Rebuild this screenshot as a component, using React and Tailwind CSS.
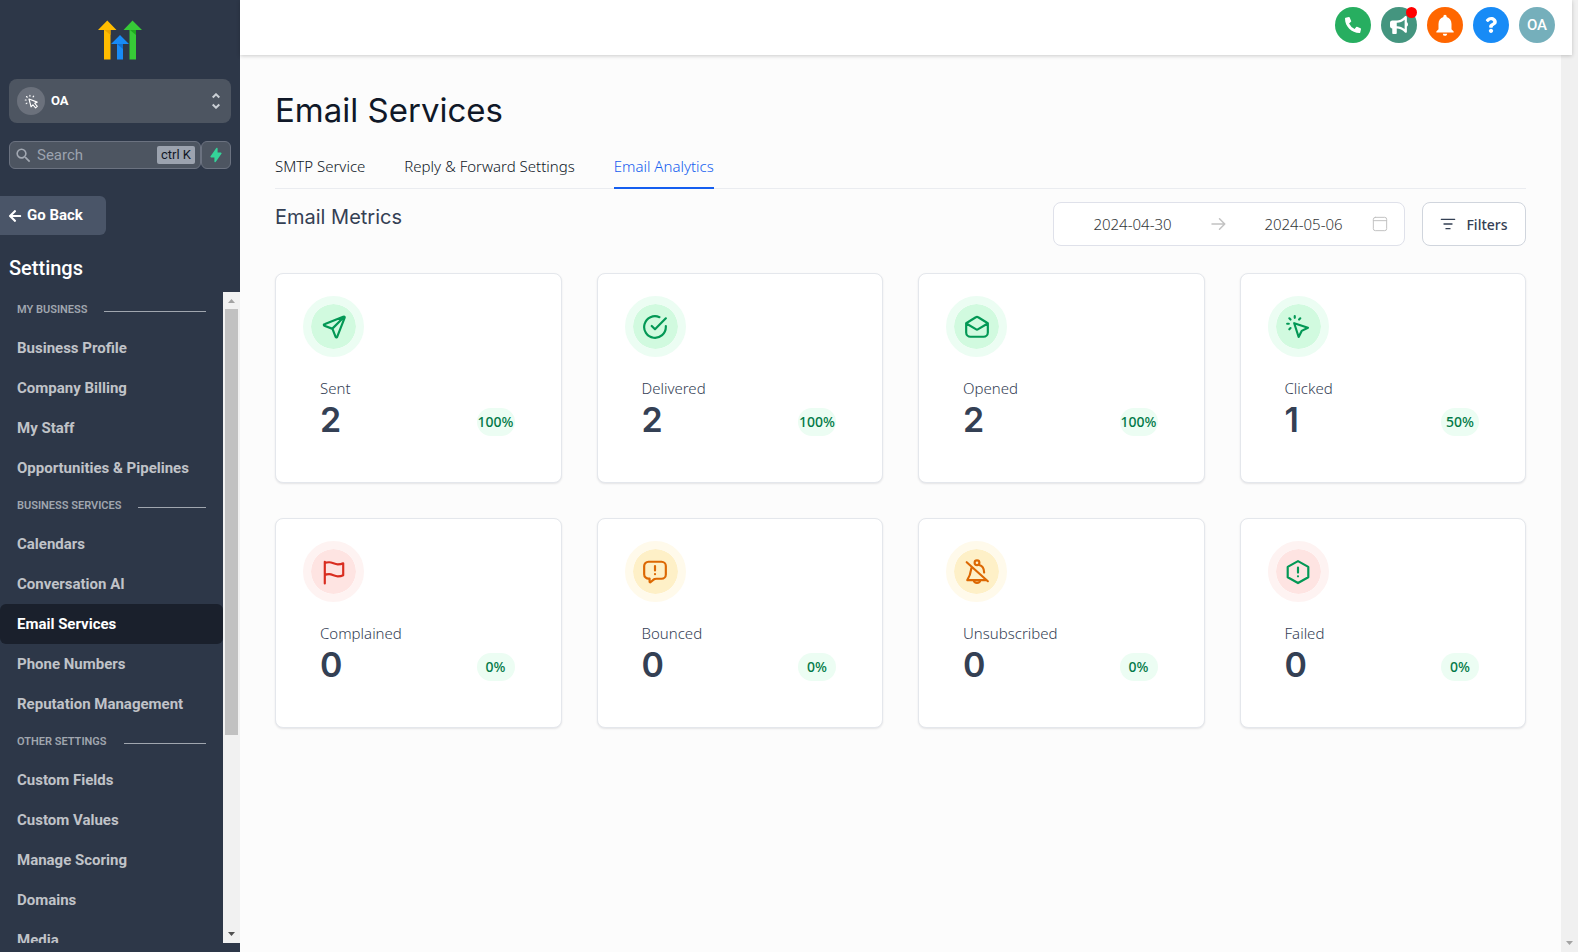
import { FaPhoneAlt, FaQuestion, FaArrowLeft } from "react-icons/fa";
import { FaBullhorn } from "react-icons/fa6";
import { HiLightningBolt } from "react-icons/hi";
import { MdNotifications, MdSearch } from "react-icons/md";

const sections = [
  {
    title: "MY BUSINESS",
    items: ["Business Profile", "Company Billing", "My Staff", "Opportunities & Pipelines"],
  },
  {
    title: "BUSINESS SERVICES",
    items: ["Calendars", "Conversation AI", "Email Services", "Phone Numbers", "Reputation Management"],
  },
  {
    title: "OTHER SETTINGS",
    items: ["Custom Fields", "Custom Values", "Manage Scoring", "Domains", "Media"],
  },
];

function Stroke({ className = "size-[26px]", width = 2, children }) {
  return (
    <svg viewBox="0 0 24 24" fill="none" stroke="currentColor" strokeWidth={width} strokeLinecap="round" strokeLinejoin="round" className={className} aria-hidden="true">
      {children}
    </svg>
  );
}

const SendIcon = () => (
  <Stroke>
    <path d="M10.5 13.500 21 3M10.600 13.800l2.700 6.800c.2.600.4.900.600 1 .2.100.5.100.700 0 .2-.1.300-.4.500-1l6.600-16.800c.2-.5.300-.8.200-1-.1-.2-.2-.3-.4-.4-.2-.1-.5 0-1 .2L3.700 9.200c-.6.200-.9.300-1 .5-.1.200-.1.500 0 .7.100.2.400.4 1 .6l6.500 2.500c.1 0 .2.100.4.300z" />
  </Stroke>
);
const CheckIcon = () => (
  <Stroke>
    <path d="M22 11.100V12a10 10 0 1 1-5.900-9.100M22 4 12 14l-3-3" />
  </Stroke>
);
const OpenedIcon = () => (
  <Stroke>
    <path d="M2 8.500 10.900 3a2 2 0 0 1 2.200 0L22 8.500V17a4 4 0 0 1-4 4H6a4 4 0 0 1-4-4zM2.500 9l8.400 5a2 2 0 0 0 2.200 0l8.400-5" />
  </Stroke>
);
const ClickIcon = () => (
  <Stroke>
    <path d="M9 3.500V2M5.100 5.100 4 4M5.100 13 4 14.100M13 5.100 14.100 4M3.500 9H2M8.500 8.500l4.100 12.700 2.800-5.600 5.800-2.900z" />
  </Stroke>
);
const FlagIcon = () => (
  <Stroke>
    <path d="M3.500 22.500v-20M3.500 15s1-1 4-1 5 2 8 2 5-1 5-1V4s-2 1-5 1-5-2-8-2-4 1-4 1" />
  </Stroke>
);
const BounceIcon = () => (
  <Stroke>
    <path d="M12 10.500V6.500M12 14h.01M7 18v2.300c0 .6 0 .8.100 1 .1.100.3.200.5.200s.4-.2.800-.5l2.300-1.900c.5-.4.8-.6 1-.7.300-.1.700-.2 1.700-.2H18a4 4 0 0 0 4-4V6.500a4 4 0 0 0-4-4H6a4 4 0 0 0-4 4V14a4 4 0 0 0 5 4z" />
  </Stroke>
);
const BellOffIcon = () => (
  <Stroke>
    <circle cx="12" cy="3.500" r="2.200" />
    <path d="M2.500 3 22 20.500M7 7.500C6.500 9 6.700 14 3 19.500h17.500M14 5.500c3 .7 4.500 3 4.600 7M9 19.500a3 2.600 0 0 0 6 0" />
  </Stroke>
);
const FailIcon = () => (
  <Stroke>
    <path d="M12 8v4.500M12 16h.01M12 2l9.500 5.300v9.600L12 22.200l-9.500-5.300V7.300z" />
  </Stroke>
);

const green = "bg-[#d1fadf] border-[#ecfdf3] text-[#039855]";
const red = "bg-[#fee4e2] border-[#fef3f2] text-[#d92d20]";
const amber = "bg-[#fef0c7] border-[#fffaeb] text-[#dc6803]";
const redGreen = "bg-[#fee4e2] border-[#fef3f2] text-[#039855]";

const metrics = [
  { label: "Sent", value: 2, rate: "100%", Icon: SendIcon, tone: green },
  { label: "Delivered", value: 2, rate: "100%", Icon: CheckIcon, tone: green },
  { label: "Opened", value: 2, rate: "100%", Icon: OpenedIcon, tone: green },
  { label: "Clicked", value: 1, rate: "50%", Icon: ClickIcon, tone: green },
  { label: "Complained", value: 0, rate: "0%", Icon: FlagIcon, tone: red },
  { label: "Bounced", value: 0, rate: "0%", Icon: BounceIcon, tone: amber },
  { label: "Unsubscribed", value: 0, rate: "0%", Icon: BellOffIcon, tone: amber },
  { label: "Failed", value: 0, rate: "0%", Icon: FailIcon, tone: redGreen },
];

function Logo() {
  return (
    <svg viewBox="0 0 44 40" className="h-10 w-11" role="img" aria-label="Logo">
      <path fill="#ffbc00" d="M9.300.5 18.500 10h-6v29.500H6V10H0z" />
      <path fill="#37ca37" d="M34.500.5 44 10h-6v29.500h-6.500V10h-6z" />
      <path fill="#188bf6" d="M22 15l9 9h-6v15.500h-6V24h-6z" />
      <path fill="#e8a200" d="M6.500 10h6v5z" />
      <path fill="#0f6fd0" d="M19 24h6v5z" />
      <path fill="#1fa81f" d="M32 10h6v5z" />
    </svg>
  );
}

function Sidebar() {
  return (
    <aside className="flex w-60 shrink-0 flex-col bg-[#2d3748] pb-[9px] font-['Roboto',sans-serif] text-white">
      <div className="flex justify-center pt-5 pb-[19px]">
        <Logo />
      </div>
      <button className="mx-[9px] flex h-11 items-center rounded-lg bg-[#4d5561] px-2 text-left">
        <span className="flex size-7 items-center justify-center rounded-full bg-[#6b717c]">
          <Stroke className="size-[15px]" width={1.8}>
            <path d="M8 8l3.300 12.500 2.900-3.300 4.300 5 2.800-2.500-4.200-4.900 4-1.800zM9.500 2v1.500M2 9.500h1.500M4 4l1.200 1.200M15.500 3.500l-1 1.200M3.500 15.500l1.200-1" />
          </Stroke>
        </span>
        <span className="ml-[6px] flex-1 text-[13px] font-bold">OA</span>
        <svg viewBox="0 0 8 16" className="mr-[3px] h-4 w-2" fill="none" stroke="#cbd0d6" strokeWidth="2" aria-hidden="true">
          <path d="M.7 4.500 4 1.300l3.300 3.200M.7 11.500 4 14.700l3.300-3.200" />
        </svg>
      </button>
      <div className="mx-[9px] mt-[18px] flex h-7">
        <label className="flex min-w-0 flex-1 items-center rounded-md border border-[#6b7280] bg-[#4d5561] pr-[5px] pl-1">
          <MdSearch className="size-[19px] shrink-0 text-[#a3a9b3]" />
          <input aria-label="Search" placeholder="Search" className="ml-1 w-full min-w-0 bg-transparent text-[15px] outline-none placeholder:text-[#9ca3af]" />
          <kbd className="flex h-[18px] shrink-0 items-center rounded-xs bg-[#9ca3af] px-1 font-['Roboto',sans-serif] text-[13px] text-[#111827]">ctrl K</kbd>
        </label>
        <button aria-label="Quick actions" className="flex w-[30px] items-center justify-center rounded-md border border-[#6b7280] bg-[#4d5561] text-[#34d399]">
          <HiLightningBolt className="size-4" />
        </button>
      </div>
      <button className="mt-[27px] flex h-[39px] w-[106px] items-center gap-[5px] rounded-r-md bg-[#4a5568] pl-2 text-[15px] font-bold">
        <FaArrowLeft className="size-[14px]" />
        Go Back
      </button>
      <h2 className="mt-[19px] h-[38px] pl-[9px] text-[20px] leading-7 font-medium">Settings</h2>
      <div className="flex min-h-0 flex-1">
        <nav className="min-w-0 flex-1 overflow-hidden">
          {sections.map((section) => (
            <div key={section.title}>
              <h3 className="flex h-9 items-center gap-[17px] pr-[17px] pl-[17px] text-[11px] font-semibold text-[#a0a6af]">
                {section.title}
                <span className="mt-[3px] h-px flex-1 bg-[#a0a6af]" />
              </h3>
              {section.items.map((item) => (
                <a
                  key={item}
                  href="#"
                  className={
                    item === "Email Services"
                      ? "flex h-10 items-center rounded-md bg-[#1a202c] pl-[17px] text-[15px] font-bold text-white"
                      : "flex h-10 items-center rounded-md pl-[17px] text-[15px] font-bold text-[#c0c3c8]"
                  }
                >
                  {item}
                </a>
              ))}
            </div>
          ))}
        </nav>
        <div className="flex w-[17px] flex-col items-center bg-[#f1f1f1]" aria-hidden="true">
          <svg viewBox="0 0 17 17" className="size-[17px] shrink-0"><path fill="#a3a3a3" d="M5 11l3.500-4 3.500 4z" /></svg>
          <div className="h-[426px] w-[13px] bg-[#c1c1c1]" />
          <div className="flex-1" />
          <svg viewBox="0 0 17 17" className="size-[17px] shrink-0"><path fill="#505050" d="M5 6l3.500 4L12 6z" /></svg>
        </div>
      </div>
    </aside>
  );
}

function TopBar() {
  const round = "flex size-9 items-center justify-center rounded-full text-white";
  return (
    <header className="z-10 mr-[6px] flex h-[55px] shrink-0 items-start justify-end gap-[10px] bg-white pt-[7px] pr-[17px] shadow-[0_1px_4px_rgba(0,0,0,0.2)]">
      <button aria-label="Phone" className={round + " bg-[#27ae60]"}><FaPhoneAlt className="size-4" /></button>
      <button aria-label="Announcements" className={round + " relative bg-[#44957f]"}>
        <FaBullhorn className="size-[18px]" />
        <span className="absolute top-0 right-0 size-[11px] rounded-full bg-[#ff0000]" />
      </button>
      <button aria-label="Notifications" className={round + " bg-[#ff6600]"}><MdNotifications className="size-[26px]" /></button>
      <button aria-label="Help" className={round + " bg-[#188bf6]"}><FaQuestion className="size-4" /></button>
      <button className={round + " bg-[#75afbb] font-['Roboto',sans-serif] text-[15px] font-medium text-[#e4f2f4]"}>OA</button>
    </header>
  );
}

function MetricCard({ label, value, rate, Icon, tone }) {
  return (
    <article className="h-[210px] rounded-lg border border-[#e4e7ec] bg-white pt-[22px] pr-[46px] pl-[27px] shadow-[0_1px_2px_rgba(16,24,40,0.1)]">
      <div className={"flex size-[61px] items-center justify-center rounded-full border-8 bg-clip-padding " + tone}>
        <Icon />
      </div>
      <div className="mt-[19px] pl-[17px]">
        <h3 className="text-[15px] leading-6 font-light text-[#344054]">{label}</h3>
        <div className="flex items-center justify-between">
          <span className="text-[34px] leading-10 font-semibold text-[#344054] font-['Inter',sans-serif]">{value}</span>
          <span className="mt-[3px] flex h-7 w-[38px] items-center justify-center rounded-full bg-[#ecfdf3] text-[14px] font-medium text-[#027a48]">{rate}</span>
        </div>
      </div>
    </article>
  );
}

export default function App() {
  return (
    <div className="flex h-screen overflow-hidden bg-[#f0f0f0] font-['Noto_Sans',sans-serif]">
      <Sidebar />
      <div className="flex min-w-0 flex-1 flex-col">
        <TopBar />
        <div className="flex min-h-0 flex-1">
          <main className="min-w-0 flex-1 bg-[#fcfcfc] pt-[33px] pr-[35px] pl-[35px]">
            <h1 className="font-['Inter',sans-serif] text-[33px] leading-[44px] text-[#101828]">Email Services</h1>
            <nav className="mt-[18px] flex h-[39px] gap-[39px] border-b border-[#eaecf0] text-[15px] leading-8 font-light text-[#101828]">
              <a href="#">SMTP Service</a>
              <a href="#">Reply &amp; Forward Settings</a>
              <a href="#" className="h-[39px] border-b-2 border-[#155eef] text-[#155eef]">Email Analytics</a>
            </nav>
            <div className="mt-[13px] flex items-start">
              <h2 className="flex-1 font-['Inter',sans-serif] text-[20px] leading-[30px] text-[#344054]">Email Metrics</h2>
              <div className="flex h-11 w-[352px] items-center rounded-lg border border-[#dfe1ea] bg-white pr-4 pl-[10px] text-[15px] font-light text-[#333639]">
                <input aria-label="Start date" defaultValue="2024-04-30" className="min-w-0 flex-1 bg-transparent text-center outline-none" />
                <Stroke className="mx-2 size-[18px] text-[#c2c2c2]" width={2}><path d="M4 12h17M14 5l7 7-7 7" /></Stroke>
                <input aria-label="End date" defaultValue="2024-05-06" className="min-w-0 flex-1 bg-transparent text-center outline-none" />
                <Stroke className="size-4 text-[#c2c2c2]" width={1.5}><path d="M5 2h14a3 3 0 0 1 3 3v14a3 3 0 0 1-3 3H5a3 3 0 0 1-3-3V5a3 3 0 0 1 3-3zM2 7h20" /></Stroke>
              </div>
              <button className="ml-[17px] flex h-11 w-[104px] items-center justify-center gap-[10px] rounded-lg border border-[#d0d5dd] bg-white text-[14px] font-medium text-[#344054]">
                <Stroke className="size-4"><path d="M2 5h20M6 12h12M9 19h6" /></Stroke>
                Filters
              </button>
            </div>
            <section className="mt-[27px] grid grid-cols-4 gap-[35px]">
              {metrics.map((m) => <MetricCard key={m.label} {...m} />)}
            </section>
          </main>
          <div className="flex w-[17px] flex-col justify-end" aria-hidden="true">
            <svg viewBox="0 0 17 17" className="size-[17px]"><path fill="#a3a3a3" d="M5 6l3.500 4L12 6z" /></svg>
          </div>
        </div>
      </div>
    </div>
  );
}
